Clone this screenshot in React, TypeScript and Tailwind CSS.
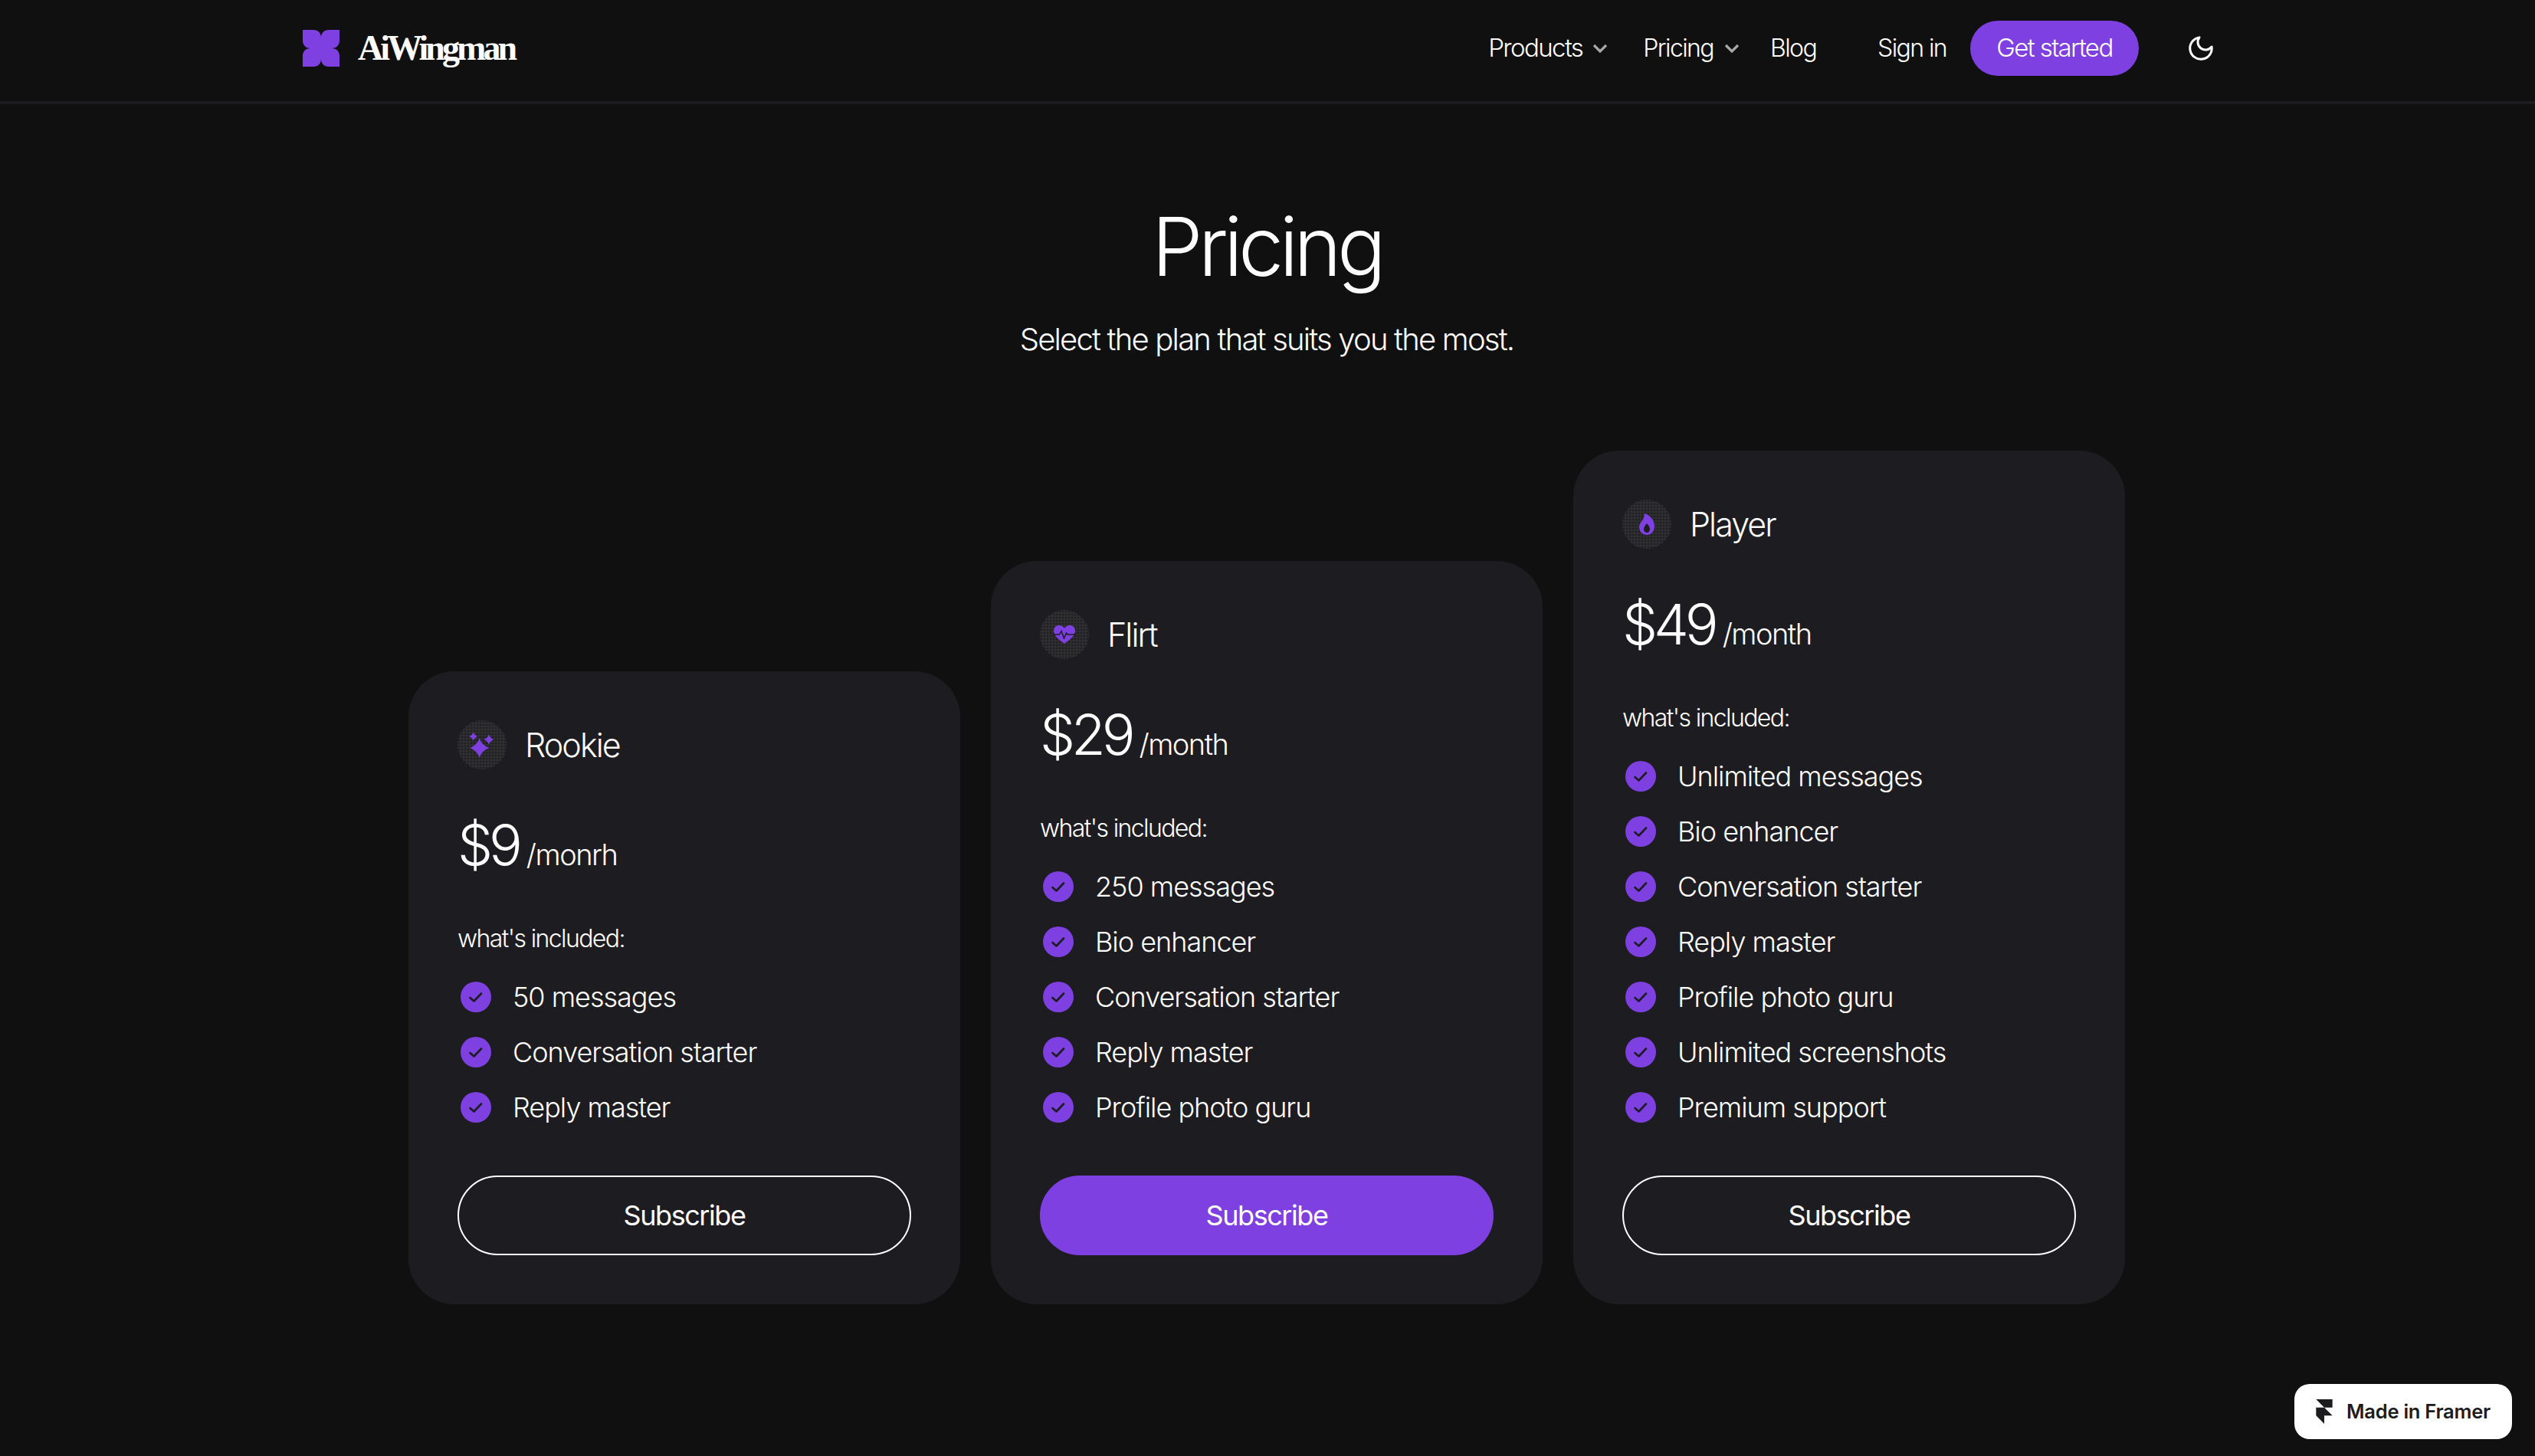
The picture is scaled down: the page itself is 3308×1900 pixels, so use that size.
const PLANS = [
  {
    name: "Rookie",
    price: "$9",
    period: "/monrh",
    icon: "sparkles",
    features: ["50 messages", "Conversation starter", "Reply master"],
    primary: false,
  },
  {
    name: "Flirt",
    price: "$29",
    period: "/month",
    icon: "heart",
    features: ["250 messages", "Bio enhancer", "Conversation starter", "Reply master", "Profile photo guru"],
    primary: true,
  },
  {
    name: "Player",
    price: "$49",
    period: "/month",
    icon: "flame",
    features: [
      "Unlimited messages",
      "Bio enhancer",
      "Conversation starter",
      "Reply master",
      "Profile photo guru",
      "Unlimited screenshots",
      "Premium support",
    ],
    primary: false,
  },
];

function Logo() {
  return (
    <svg viewBox="0 0 48 48" className="h-12 w-12 fill-[#7f40e2]">
      <path d="M0 0H14C20 0 24 4 24 10C24 4 28 0 34 0H48V14C48 20 44 24 38 24C44 24 48 28 48 34V48H34C28 48 24 44 24 38C24 44 20 48 14 48H0V34C0 28 4 24 10 24C4 24 0 20 0 14Z" />
    </svg>
  );
}

function Chevron() {
  return (
    <svg viewBox="0 0 20 14" className="h-[14px] w-5 fill-none stroke-[#a8a8a8] stroke-[3.2]">
      <path d="M2 3l8 8 8-8" />
    </svg>
  );
}

function PlanIcon({ icon }: { icon: string }) {
  return (
    <div className="flex h-16 w-16 shrink-0 items-center justify-center rounded-full bg-[#2e2d30] bg-[radial-gradient(#1d1c20_1px,transparent_1px)] bg-[length:4px_4px]">
      {icon === "sparkles" && (
        <svg viewBox="0 0 64 64" className="h-16 w-16 fill-[#7f40e2]">
          <path d="M28.7 23.5Q32 32.7 41.2 36Q32 39.3 28.7 48.5Q25.4 39.3 16.2 36Q25.4 32.7 28.7 23.5Z" />
          <path d="M20.7 15.5Q22.2 19.500 26.2 21Q22.2 22.500 20.7 26.5Q19.2 22.500 15.2 21Q19.2 19.500 20.7 15.5Z" />
          <path d="M41 18.5Q42.8 23.2 47.5 25Q42.8 26.8 41 31.5Q39.2 26.8 34.5 25Q39.2 23.2 41 18.5Z" />
        </svg>
      )}
      {icon === "heart" && (
        <svg viewBox="0 0 30 26" className="h-[26px] w-[30px]">
          <path
            className="fill-[#7f40e2]"
            d="M15 25C7 19 1 14.500 1 8 1 3.500 4.500 1 8 1c3 0 5.500 1.500 7 4 1.500-2.500 4-4 7-4 3.500 0 7 2.500 7 7 0 6.500-6 11-14 17z"
          />
          <path
            className="fill-none stroke-[#1d1c20] stroke-[1.500]"
            d="M0 13h8.500l2.500-4.500 3.500 9.500 3-7 1.500 2h11"
          />
        </svg>
      )}
      {icon === "flame" && (
        <svg viewBox="0 0 20 28" className="h-7 w-5">
          <path
            className="fill-[#7f40e2]"
            d="M7 0c6 1.500 13 8 13 17 0 6.500-4.500 11-10 11S0 23.500 0 17.500C0 12 7 9 7 0z"
          />
          <path className="fill-[#1d1c20]" d="M10 13c2.500 3 4 5 4 7.500 0 2.500-1.800 4.500-4 4.500s-4-2-4-4.500c0-2.500 1.500-4.500 4-7.500z" />
        </svg>
      )}
    </div>
  );
}

function Check() {
  return (
    <div className="flex h-12 w-12 shrink-0 items-center justify-center">
      <div className="flex h-10 w-10 items-center justify-center rounded-full bg-[#7f40e2]">
        <svg viewBox="0 0 20 20" className="h-5 w-5 fill-none stroke-[#1d1c20] stroke-[2.600]">
          <path d="M2.500 11l5 4.500L17 5.500" strokeLinecap="round" strokeLinejoin="round" />
        </svg>
      </div>
    </div>
  );
}

export default function App() {
  return (
    <div className="relative min-h-screen bg-[#101010] font-['Inter',sans-serif] text-white">
      <header className="flex h-[136px] items-center border-b-4 border-[#1c1c1e] pb-[6px] pl-[395px] pr-[417px]">
        <div className="flex items-center gap-6">
          <Logo />
          <span className="font-['Liberation_Serif',serif] text-[46px] font-bold leading-none tracking-[-0.085em]">
            AiWingman
          </span>
        </div>
        <nav className="ml-auto flex items-center text-[32px] font-[350] tracking-[-0.05em]">
          <span className="text-[33px]">Products</span>
          <span className="ml-[13px]"><Chevron /></span>
          <span className="ml-[46px]">Pricing</span>
          <span className="ml-[14px]"><Chevron /></span>
          <span className="ml-[40px]">Blog</span>
          <span className="ml-[80px]">Sign in</span>
          <span className="ml-[31px] flex h-[72px] w-[220px] items-center justify-center rounded-full bg-[#7f40e2] text-[33px]">
            Get started
          </span>
          <svg viewBox="0 0 24 24" className="ml-[62px] h-[38px] w-[38px] fill-none stroke-white stroke-[1.900]">
            <path d="M12 3a6 6 0 0 0 9 9 9 9 0 1 1-9-9z" strokeLinejoin="round" transform="rotate(-8 12 12)" />
          </svg>
        </nav>
      </header>

      <main className="flex flex-col items-center pr-[2px] pt-[121px]">
        <h1 className="text-[106px] font-[350] leading-[130px] tracking-[-0.055em]">Pricing</h1>
        <p className="mt-[31px] text-[40px] font-[350] leading-[50px] tracking-[-0.045em]">
          Select the plan that suits you the most.
        </p>

        <div className="mt-[120px] flex items-end gap-10">
          {PLANS.map((plan) => (
            <div key={plan.name} className="w-[720px] rounded-[60px] bg-[#1d1c20] p-16">
              <div className="flex items-center gap-6">
                <PlanIcon icon={plan.icon} />
                <span className="text-[43px] font-[350] leading-none tracking-[-0.045em]">{plan.name}</span>
              </div>
              <div className="mt-[51px] flex items-baseline gap-[10px] leading-[96px]">
                <span className="text-[73px] font-[350] tracking-[-0.07em]">{plan.price}</span>
                <span className="text-[38px] font-[350] tracking-[-0.04em]">{plan.period}</span>
              </div>
              <p className="mt-[42px] text-[32px] font-[350] leading-10 tracking-[-0.05em]">what's included:</p>
              <ul className="mt-[32px] flex flex-col gap-6">
                {plan.features.map((feature) => (
                  <li key={feature} className="flex items-center gap-6 text-[36px] font-[350] leading-[48px] tracking-[-0.028em]">
                    <Check />
                    {feature}
                  </li>
                ))}
              </ul>
              <button
                className={
                  plan.primary
                    ? "mt-[65px] h-[104px] w-full rounded-full border-2 border-[#7f40e2] bg-[#7f40e2] text-[36px] tracking-[-0.04em]"
                    : "mt-[65px] h-[104px] w-full rounded-full border-2 border-white text-[36px] tracking-[-0.04em]"
                }
              >
                Subscribe
              </button>
            </div>
          ))}
        </div>
      </main>

      <div className="absolute bottom-[22px] right-[30px] flex h-[72px] w-[284px] items-center justify-center gap-[18px] rounded-[20px] bg-white text-[25.5px] font-semibold tracking-[-0.01em] text-[#1c1c1e]">
        <svg viewBox="4 0 16 24" className="h-8 w-[22px] fill-[#1c1c1e]">
          <path d="M4 0h16v8h-8zM4 8h8l8 8H4zM4 16h8v8z" />
        </svg>
        Made in Framer
      </div>
    </div>
  );
}
